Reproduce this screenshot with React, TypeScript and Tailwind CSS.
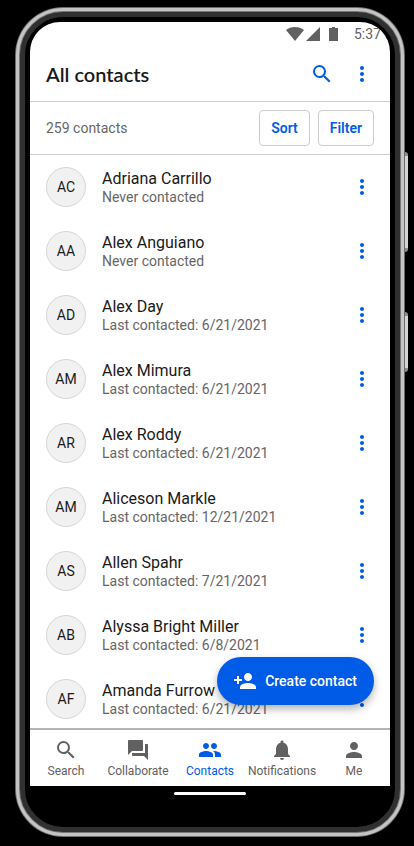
import React from "react";
import {
  MdForum,
  MdMoreVert,
  MdNotifications,
  MdPeople,
  MdPerson,
  MdPersonAdd,
  MdSearch,
} from "react-icons/md";
import type { IconType } from "react-icons";

type Contact = { initials: string; name: string; status: string };

const contacts: Contact[] = [
  { initials: "AC", name: "Adriana Carrillo", status: "Never contacted" },
  { initials: "AA", name: "Alex Anguiano", status: "Never contacted" },
  { initials: "AD", name: "Alex Day", status: "Last contacted: 6/21/2021" },
  { initials: "AM", name: "Alex Mimura", status: "Last contacted: 6/21/2021" },
  { initials: "AR", name: "Alex Roddy", status: "Last contacted: 6/21/2021" },
  { initials: "AM", name: "Aliceson Markle", status: "Last contacted: 12/21/2021" },
  { initials: "AS", name: "Allen Spahr", status: "Last contacted: 7/21/2021" },
  { initials: "AB", name: "Alyssa Bright Miller", status: "Last contacted: 6/8/2021" },
  { initials: "AF", name: "Amanda Furrow", status: "Last contacted: 6/21/2021" },
];

const tabs: { label: string; icon: IconType; active?: boolean }[] = [
  { label: "Search", icon: MdSearch },
  { label: "Collaborate", icon: MdForum },
  { label: "Contacts", icon: MdPeople, active: true },
  { label: "Notifications", icon: MdNotifications },
  { label: "Me", icon: MdPerson },
];

function StatusBar() {
  return (
    <div className="flex h-6 shrink-0 items-center justify-end pr-[9px] text-[#616161]">
      <svg className="h-[14px] w-[18px]" viewBox="0 0 18 14" fill="currentColor" aria-hidden="true">
        <path d="M9 14 0 3C2.500 1 5.500 0 9 0s6.500 1 9 3L9 14Z" />
      </svg>
      <svg className="ml-0.5 h-[14px] w-[14px]" viewBox="0 0 14 14" fill="currentColor" aria-hidden="true">
        <path d="M0 14 14 0v14H0Z" />
      </svg>
      <svg className="ml-[9px] h-[14px] w-[9px]" viewBox="0 0 9 14" fill="currentColor" aria-hidden="true">
        <path d="M3 0h3v1h3v13H0V1h3V0Z" />
      </svg>
      <time className="ml-4 text-sm">5:37</time>
    </div>
  );
}

function MoreButton({ label }: { label: string }) {
  return (
    <button type="button" aria-label={label} className="flex size-6 shrink-0 items-center justify-center text-[#005ce6]">
      <MdMoreVert className="size-6" />
    </button>
  );
}

function ContactRow({ contact }: { contact: Contact }) {
  return (
    <li className="flex h-16 items-center gap-4 px-4">
      <span className="flex size-10 shrink-0 items-center justify-center rounded-full border border-[#d6d6d6] bg-[#f1f1f1] text-sm text-[#1a1a1a]">
        {contact.initials}
      </span>
      <div className="min-w-0 flex-1">
        <p className="truncate text-base leading-5 text-[#1a1a1a]">{contact.name}</p>
        <p className="truncate text-sm leading-4 text-[#666666]">{contact.status}</p>
      </div>
      <MoreButton label={`More options for ${contact.name}`} />
    </li>
  );
}

export default function App() {
  return (
    <div className="flex h-screen flex-col bg-black pt-[7px] pr-[9px] pb-[9px] pl-[15px] font-[Roboto,sans-serif]">
      <div className="relative flex min-h-0 flex-1 flex-col rounded-[48px] bg-[#6b6b6b] p-px">
        <span className="absolute top-[145px] -right-[3px] h-[100px] w-[3px] rounded-r-sm border-y-4 border-[#8c8c8c] bg-[#d4d4d4]" />
        <span className="absolute top-[305px] -right-[3px] h-[60px] w-[3px] rounded-r-sm border-y-4 border-[#8c8c8c] bg-[#d4d4d4]" />
        <div className="flex min-h-0 flex-1 flex-col rounded-[47px] border-3 border-[#c4c4c4] bg-[#777777] p-px">
          <div className="flex min-h-0 flex-1 flex-col rounded-[43px] border-5 border-[#303030] bg-black px-[5px] pt-[5px]">
            <div className="flex min-h-0 flex-1 flex-col overflow-hidden rounded-t-[30px] bg-white">
              <StatusBar />
              <header className="flex h-14 shrink-0 items-center gap-4 border-b border-[#cccccc] px-4">
                <h1 className="flex-1 font-[Lato,sans-serif] text-xl font-semibold text-[#1a1a1a]">All contacts</h1>
                <button type="button" aria-label="Search contacts" className="flex size-6 items-center justify-center text-[#005ce6]">
                  <MdSearch className="size-6" />
                </button>
                <MoreButton label="More options" />
              </header>
              <div className="flex shrink-0 items-center gap-2 border-b border-[#cccccc] px-4 py-2">
                <p className="flex-1 text-sm text-[#666666]">259 contacts</p>
                <button type="button" className="h-9 rounded border border-[#cccccc] px-[11px] text-sm font-semibold text-[#005ce6]">
                  Sort
                </button>
                <button type="button" className="h-9 rounded border border-[#cccccc] px-[11px] text-sm font-semibold text-[#005ce6]">
                  Filter
                </button>
              </div>
              <main className="relative flex min-h-0 flex-1 flex-col">
                <ul className="min-h-0 flex-1 overflow-y-auto [scrollbar-width:none]">
                  {contacts.map((contact) => (
                    <ContactRow key={contact.name} contact={contact} />
                  ))}
                </ul>
                <button
                  type="button"
                  className="absolute right-4 bottom-[23px] flex h-12 items-center gap-2 rounded-full bg-[#005ce6] pr-[17px] pl-4 text-sm font-medium text-white shadow-[0_4px_8px_rgba(0,0,0,0.3)]"
                >
                  <MdPersonAdd className="size-6" />
                  Create contact
                </button>
              </main>
              <nav className="flex h-[58px] shrink-0 border-t-2 border-[#b3b3b3]">
                {tabs.map(({ label, icon: Icon, active }) => (
                  <a
                    key={label}
                    href="#"
                    aria-current={active ? "page" : undefined}
                    className={`flex flex-1 basis-0 flex-col items-center gap-px pt-2 text-xs ${active ? "text-[#005ce6]" : "text-[#616161]"}`}
                  >
                    <Icon className="size-6" />
                    <span>{label}</span>
                  </a>
                ))}
              </nav>
            </div>
            <div className="flex h-[41px] shrink-0 justify-center pt-1.5">
              <span className="h-[3px] w-[72px] rounded-full bg-white" />
            </div>
          </div>
        </div>
      </div>
    </div>
  );
}
